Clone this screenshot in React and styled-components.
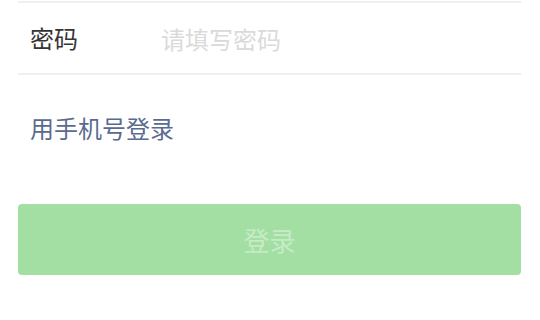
import styled, { createGlobalStyle } from "styled-components";

const GlobalStyle = createGlobalStyle`
  html, body {
    margin: 0;
    padding: 0;
    background: #ffffff;
  }
  body {
    font-family: "Noto Sans CJK SC", "Noto Sans", sans-serif;
  }
`;

const Page = styled.div`
  width: 540px;
  height: 320px;
  padding: 1px 19px 0 18px;
  box-sizing: border-box;
  overflow: hidden;
`;

const Field = styled.label`
  display: flex;
  align-items: center;
  height: 70px;
  padding-left: 12px;
  border-top: 2px solid #efefef;
  border-bottom: 2px solid #efefef;
`;

const Label = styled.span`
  width: 131px;
  flex-shrink: 0;
  font-size: 24px;
  line-height: 24px;
  color: #353535;
`;

const Input = styled.input`
  flex: 1;
  border: none;
  outline: none;
  padding: 0;
  background: transparent;
  font-family: inherit;
  font-size: 24px;
  line-height: 24px;
  color: #353535;

  &::placeholder {
    color: #dadada;
  }
`;

const SwitchLink = styled.a`
  display: block;
  margin: 41px 0 0 12px;
  font-size: 24px;
  line-height: 24px;
  color: #5b6b8f;
  text-decoration: none;
`;

const SubmitButton = styled.button`
  display: flex;
  align-items: center;
  justify-content: center;
  width: 100%;
  height: 71px;
  margin-top: 64px;
  border: none;
  border-radius: 4px;
  background: #a3dfa3;
  color: #c6ebc6;
  font-family: inherit;
  font-size: 26px;
  line-height: 26px;
  padding: 0;
`;

const App = () => {
  return (
    <>
      <GlobalStyle />
      <Page>
        <Field>
          <Label>密码</Label>
          <Input type="password" placeholder="请填写密码" />
        </Field>
        <SwitchLink href="#">用手机号登录</SwitchLink>
        <SubmitButton disabled>登录</SubmitButton>
      </Page>
    </>
  );
};

export default App;
